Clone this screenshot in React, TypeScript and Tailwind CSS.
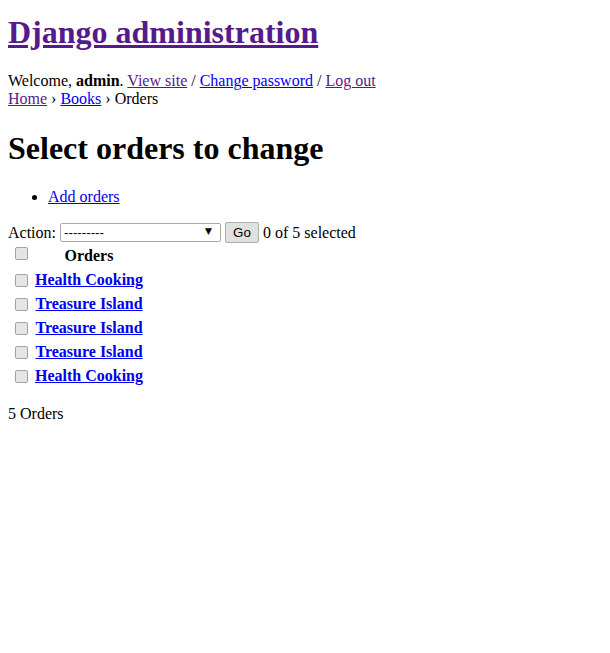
import React from "react";

const rows = ["Health Cooking", "Treasure Island", "Treasure Island", "Treasure Island", "Health Cooking"];

const Check = ({ head = false }: { head?: boolean }) => (
  <input
    type="checkbox"
    className={
      head
        ? "block appearance-none w-[13px] h-[13px] m-[0px_3px_6px_4px] border border-[#a3a3a3] rounded-[2px] bg-[#e5e5e5]"
        : "block appearance-none w-[13px] h-[13px] m-[3px_3px_3px_4px] border border-[#a3a3a3] rounded-[2px] bg-[#e5e5e5]"
    }
  />
);

const App = () => {
  return (
    <div className="min-h-screen bg-white text-black px-2 pt-[14px] pb-2 text-[16px] leading-[normal] font-['Liberation_Serif','Times_New_Roman',serif]">
      {/* Header */}
      <h1 className="text-[32px] font-bold mb-[21.44px]">
        <a href="#" className="underline text-[#551a8b]">Django administration</a>
      </h1>
      <div>
        Welcome, <strong className="font-bold">admin</strong>.{" "}
        <a href="#" className="underline text-[#551a8b]">View site</a> /{" "}
        <a href="#" className="underline text-[#0000ee]">Change password</a> /{" "}
        <a href="#" className="underline text-[#551a8b]">Log out</a>
      </div>
      <div>
        <a href="#" className="underline text-[#551a8b]">Home</a> ›{" "}
        <a href="#" className="underline text-[#0000ee]">Books</a> › Orders
      </div>

      {/* Content */}
      <h1 className="text-[32px] font-bold my-[21.44px]">Select orders to change</h1>
      <ul className="list-disc pl-10 my-4">
        <li>
          <a href="#" className="underline text-[#0000ee]">Add orders</a>
        </li>
      </ul>

      <form>
        {/* Actions bar */}
        <div className="flex items-center h-[21px]">
          <label>Action:</label>
          <span className="relative ml-1">
            <select className="block appearance-none w-[161px] h-[19px] border border-[#a9a9a9] rounded-[2px] bg-white pl-[3px] text-[13.33px] font-['Liberation_Sans',Arial,sans-serif] text-black">
              <option>---------</option>
            </select>
            <span className="absolute right-[9px] top-[3px] text-[9px] pointer-events-none font-['DejaVu_Sans',sans-serif]">▼</span>
          </span>
          <button
            type="button"
            className="ml-1 w-[34px] h-[21px] border border-[#adadad] rounded-[2px] bg-[#e1e1e1] text-[13.33px] font-['Liberation_Sans',Arial,sans-serif]"
          >
            Go
          </button>
          <span className="ml-1">0 of 5 selected</span>
        </div>

        <table className="border-separate border-spacing-[2px]">
          <thead>
            <tr>
              <td className="p-px h-[22px] align-middle">
                <Check head />
              </td>
              <th className="p-px h-[22px] text-center align-middle font-bold">Orders</th>
            </tr>
          </thead>
          <tbody>
            {rows.map((r, i) => (
              <tr key={i}>
                <td className="p-px h-[22px] align-middle">
                  <Check />
                </td>
                <th className="p-px h-[22px] text-center align-middle font-bold">
                  <a href="#" className="underline text-[#0000ee]">{r}</a>
                </th>
              </tr>
            ))}
          </tbody>
        </table>
        <p className="my-4">5 Orders</p>
      </form>
    </div>
  );
};

export default App;
